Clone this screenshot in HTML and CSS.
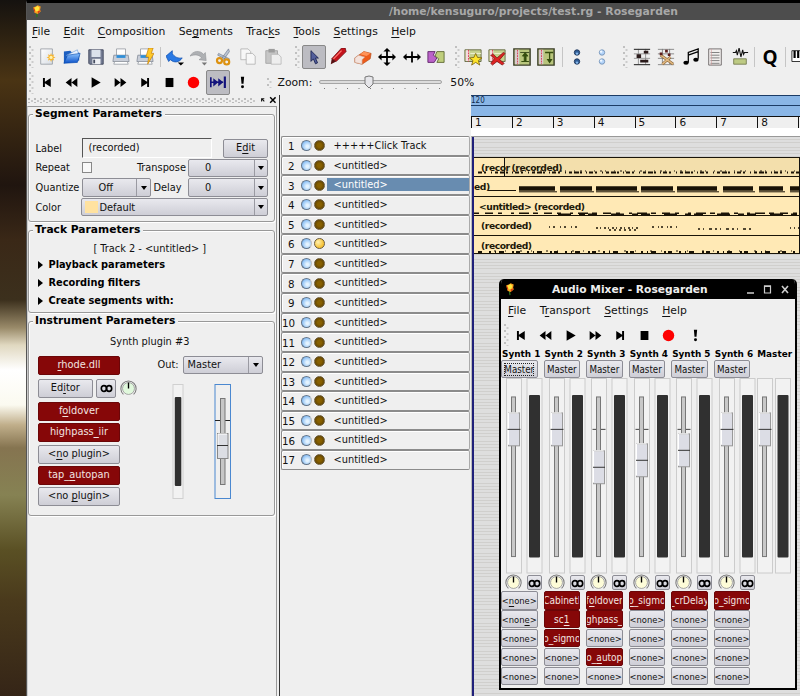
FILE: index.html
```html
<!DOCTYPE html>
<html lang="en">
<head>
<meta charset="utf-8">
<title>Rosegarden</title>
<link rel="stylesheet" href="styles.css">
</head>
<body>
<svg class="defs" aria-hidden="true">
  <defs>
    <linearGradient id="blue" x2="0" y2="1"><stop offset="0" stop-color="#8cc4ff"/><stop offset="1" stop-color="#0b50c8"/></linearGradient>
    <linearGradient id="paper" x2="1" y2="1"><stop offset="0" stop-color="#fff"/><stop offset="1" stop-color="#d8dde4"/></linearGradient>
    <symbol id="new" viewBox="0 0 20 20"><path d="M3 1h13v17H3z" fill="url(#paper)" stroke="#8a8f98" stroke-width=".8"/><path d="M14.500 5.500l1 2.500 2.500-1-1 2.500 2.500 1-2.500 1 1 2.500-2.500-1-1 2.500-1-2.500-2.500 1 1-2.500-2.500-1 2.500-1-1-2.500 2.500 1z" fill="#f7b42c"/><circle cx="14.500" cy="10.500" r="1.800" fill="#fff3b0"/></symbol>
    <symbol id="open" viewBox="0 0 20 20"><path d="M1 17V4l7-1 2 2h8v9z" fill="#1d5fc0"/><path d="M4 8l12-6 2 8-10 4z" fill="#e8f2ff" stroke="#6b9bd8" stroke-width=".7"/><path d="M1 17L5 8l14-2-3 10z" fill="url(#blue)" stroke="#0b4cae" stroke-width=".7"/></symbol>
    <symbol id="save" viewBox="0 0 20 20"><path d="M2 2h16v16H3l-1-1z" fill="#747c93" stroke="#3d4459"/><path d="M5 2h10v8H5z" fill="#dce2ec"/><path d="M6 12h9v6H6z" fill="#eef0f4"/><path d="M7 13h2v4H7z" fill="#454c60"/></symbol>
    <symbol id="print" viewBox="0 0 20 20"><path d="M5 9V1h10v8z" fill="#fff" stroke="#8a8f98" stroke-width=".8"/><path d="M2 8h16l1 7H1z" fill="#c9ced8" stroke="#7b8190" stroke-width=".8"/><path d="M5 8h10v3H5z" fill="#2f8fd8"/><path d="M3 15h14l1 3H2z" fill="#fff" stroke="#8a8f98" stroke-width=".8"/></symbol>
    <symbol id="preview" viewBox="0 0 20 20"><use href="#print"/><path d="M14 0h5l-2 6h3l-7 12 1-8h-3z" fill="#ffc928" stroke="#c88208" stroke-width=".8"/></symbol>
    <symbol id="undo" viewBox="0 0 20 20"><path d="M0 9l7-6v3c2 4 7 6 11 5 -3 5-9 6-13 2l-2 2z" fill="#2a79e4" stroke="#0b4cae" stroke-width=".8"/><path d="M13 16h7l-3.500 3.500z"/></symbol>
    <symbol id="redo" viewBox="0 0 20 20"><path d="M18 14l-8-1 3-2C10 7 5 7 0 9 3 3 11 2 15 7l2-2z" fill="#aeb0b3" stroke="#8e9093" stroke-width=".6"/><path d="M13 16h6l-3 3.500z" fill="#777"/></symbol>
    <symbol id="cut" viewBox="0 0 20 20"><path d="M15 1l1 3-7 10-2-2zM4 6l12 6-1 2L3 8z" fill="#bcc5d2" stroke="#67758b" stroke-width=".7"/><g fill="none" stroke="#dd9211" stroke-width="2.400"><circle cx="5" cy="14" r="2.800"/><circle cx="13" cy="15.500" r="2.800"/></g></symbol>
    <symbol id="copy" viewBox="0 0 20 20"><g fill="#f7f7f7" stroke="#a9a9a9" stroke-width=".8"><path d="M2 1h8l3 3v9H2z"/><path d="M8 6h7l3 3v9H8z"/></g></symbol>
    <symbol id="paste" viewBox="0 0 20 20"><path d="M2 3h13v14H2z" fill="#c6c6c6" stroke="#a5a5a5"/><path d="M5 1h7v4H5z" fill="#9d9d9d"/><path d="M8 7h8l3 3v8H8z" fill="#eee" stroke="#b0b0b0" stroke-width=".8"/></symbol>
    <symbol id="arrow" viewBox="0 0 20 20"><path d="M6 2v13l3-3 2.500 6 2.500-1.200-2.500-5.800H15z" fill="#525e9b" stroke="#171e4c"/></symbol>
    <symbol id="pencil" viewBox="0 0 20 20"><path d="M14 0l4 0 1 4-11 11-5-3z" fill="#c4121b" stroke="#640a0e" stroke-width=".8"/><path d="M14 3L5 12" stroke="#ff7b72" stroke-width="1.300"/><path d="M3 12l5 3-6 3z" fill="#571012"/></symbol>
    <symbol id="eraser" viewBox="0 0 20 20"><path d="M1 11l10-7 8 2-1 6-9 6-8-2z" fill="#ed5b1b" stroke="#b8501c" stroke-width=".8"/><path d="M1 11l4-3 7 2-3 3v5l-8-2z" fill="#f3e2dc" stroke="#c9a08c" stroke-width=".6"/><path d="M11 4l7 2-4 3-7-2z" fill="#ff9358"/></symbol>
    <symbol id="move" viewBox="0 0 20 20"><path d="M10 0l4 4h-3v5h5V6l4 4-4 4v-3h-5v5h3l-4 4-4-4h3v-5H4v3l-4-4 4-4v3h5V4H6z"/></symbol>
    <symbol id="resize" viewBox="0 0 20 20"><path d="M9 4h2v5h5V6l4 4-4 4v-3h-5v5H9v-5H4v3l-4-4 4-4v3h5z"/></symbol>
    <symbol id="split" viewBox="0 0 20 20"><path d="M1 4h8l-2 4 4 3-3 5H1z" fill="#bb63c9" stroke="#60266a"/><path d="M11 4h8v12h-8l2-4-4-3z" fill="#bfce7c" stroke="#5f6937"/></symbol>
    <symbol id="seg" viewBox="0 0 20 20"><path d="M1 2h18v13H1z" fill="#c4d08e" stroke="#63683f"/><path d="M7 6h12" stroke="#f5f5df"/><path d="M2 2.500h4v12H2z" fill="#f3dbe0"/><path d="M5 2v13" stroke="#dc3850" stroke-dasharray="2 1"/></symbol>
    <symbol id="star" viewBox="0 0 20 20"><use href="#seg"/><path d="M13 6l2 4.500 5 .5-4 3 1.500 5-4.500-3-4.500 3L10 14l-4-3 5-.5z" fill="#ffe52b" stroke="#79610b" stroke-width=".9"/></symbol>
    <symbol id="del" viewBox="0 0 20 20"><use href="#seg"/><path d="M3 8l3-1 4 4 7-6 2 1-6 7 5 4-2 2-6-4-5 4-2-2 4-5z" fill="#dc2323" stroke="#781010" stroke-width=".8"/></symbol>
    <symbol id="up" viewBox="0 0 20 20"><path d="M1 1h18v18H1z" fill="#b8c57c" stroke="#3b3e28" stroke-width="1.600"/><path d="M2 2h5v16H2z" fill="#d9cccd"/><path d="M5 2v16" stroke="#d83e54" stroke-dasharray="2 1"/><path d="M8 5h10" stroke="#38471c"/><path d="M13.500 5l3 4h-2v6h3H9.500h3V9h-2z" stroke="#354d0e" fill="#354d0e"/></symbol>
    <symbol id="down" viewBox="0 0 20 20"><path d="M1 1h18v18H1z" fill="#b8c57c" stroke="#3b3e28" stroke-width="1.600"/><path d="M2 2h5v16H2z" fill="#d9cccd"/><path d="M5 2v16" stroke="#d83e54" stroke-dasharray="2 1"/><path d="M9 5h9M14 5v8h2l-2 3-2-3h2" stroke="#354d0e" stroke-width="1.400" fill="#354d0e"/></symbol>
    <symbol id="dots" viewBox="0 0 20 20"><g fill="#315e97" stroke="#1d3458"><circle cx="10" cy="5" r="3"/><circle cx="10" cy="15" r="3"/></g><g fill="#88b9ea"><circle cx="10" cy="6.200" r="1.300"/><circle cx="10" cy="16.200" r="1.300"/></g></symbol>
    <symbol id="dotslight" viewBox="0 0 20 20"><g fill="#b5d5fa" stroke="#7392b7"><circle cx="10" cy="5" r="3"/><circle cx="10" cy="15" r="3"/></g><g fill="#f0f8ff"><circle cx="9" cy="4" r="1.300"/><circle cx="9" cy="14" r="1.300"/></g></symbol>
    <symbol id="matrix" viewBox="0 0 20 20"><path d="M1 1.500h18M1 6.500h18M1 11.500h18M1 18.500h18M6 1v17M14 1v17" stroke="#888" stroke-width=".9"/><path d="M1 1.500h18M1 18.500h18" stroke="#222"/><path d="M4 7h5v4H4zM12 3h5v3h-5zM8 13h9v3H8z" fill="#2b1b1b"/></symbol>
    <symbol id="perc" viewBox="0 0 20 20"><path d="M1 1.500h18M1 6.500h18M1 11.500h18M1 18.500h18M6 1v17M14 1v17" stroke="#777" stroke-width=".9"/><path d="M4 8l14 10M15 10L6 18" stroke="#8a6234" stroke-width="3"/><path d="M4 8l14 10M15 10L6 18" stroke="#e0b880" stroke-width="1.800"/><path d="M3 5h3v3H3zM9 2h3v3H9zM12 6h3v3h-3z" fill="#5c1c1c"/></symbol>
    <symbol id="note" viewBox="0 0 20 20"><path d="M7 16V5l11-4v11M7 8l11-4" fill="none" stroke="#000" stroke-width="1.400"/><ellipse cx="4.500" cy="16.500" rx="3" ry="2.200"/><ellipse cx="15.500" cy="13" rx="3" ry="2.200"/></symbol>
    <symbol id="list" viewBox="0 0 20 20"><path d="M3 1h14v18H3z" fill="#f2efee" stroke="#6c6666"/><path d="M5 5h10M5 8h10M5 11h10M5 14h10M5 17h10" stroke="#777"/><path d="M6 1v18" stroke="#d09b9b" stroke-width=".7"/></symbol>
    <symbol id="audio" viewBox="0 0 20 20"><path d="M2 5h3l1-2 1 5 2-8 2 10 2-8 1 5 1-2h4" fill="none" stroke="#111" stroke-width="1.200"/><path d="M3 12h14v6H3z" fill="#bdca83" stroke="#767d51"/></symbol>
    <symbol id="keys" viewBox="0 0 20 20"><path d="M1 3h19v12H1z" fill="#fff" stroke="#222"/><path d="M4 3v8M8 3v8M12 3v8" stroke="#000" stroke-width="2.400"/><path d="M12 12h8v7l-6-2z" fill="#b5d829"/></symbol>
    <symbol id="first" viewBox="0 0 20 20"><path d="M3 3h3v6l9-6v14l-9-6v6H3z"/></symbol>
    <symbol id="rew" viewBox="0 0 20 20"><path d="M10 3v14L1 10zM19 3v14l-9-7z"/></symbol>
    <symbol id="play" viewBox="0 0 20 20"><path d="M4 2l14 8-14 8z"/></symbol>
    <symbol id="fwd" viewBox="0 0 20 20"><path d="M1 3v14l9-7zM10 3v14l9-7z"/></symbol>
    <symbol id="last" viewBox="0 0 20 20"><path d="M17 3h-3v6L5 3v14l9-6v6h3z"/></symbol>
    <symbol id="stop" viewBox="0 0 20 20"><path d="M4 3h12v14H4z"/></symbol>
    <symbol id="rec" viewBox="0 0 20 20"><circle cx="10" cy="10" r="8.800" fill="#fe0000"/></symbol>
    <symbol id="follow" viewBox="0 0 20 20"><path d="M1 4v12M1 10h15" stroke="#12127b" stroke-width="2"/><path d="M4 5l6 5-6 5zM10 5l6 5-6 5z" fill="#12127b"/><path d="M18 3v14" stroke="#12127b" stroke-width="2.600"/></symbol>
    <symbol id="panic" viewBox="0 0 20 20"><path d="M7.500 1h5l-1 11h-3z"/><circle cx="10" cy="16.500" r="2.300"/></symbol>
    <symbol id="rose" viewBox="0 0 16 20"><path d="M7 12l1 7" stroke="#28771d" stroke-width="2"/><path d="M2 3l4-1 3-2 5 2-1 5 1 3-5 4-5-2-1-4z" fill="#f79a20"/><path d="M4 4l5-3 3 3-2 5-4 1z" fill="#ffe73d"/><path d="M2 3l3 5-1 3zM9 10l5-2-4 5z" fill="#da3113"/></symbol>
    <symbol id="link" viewBox="0 0 20 14"><g fill="none" stroke="#000" stroke-width="2.600"><rect x="2" y="2.500" width="8" height="9" rx="4"/><rect x="10" y="2.500" width="8" height="9" rx="4"/></g></symbol>
    <symbol id="knob" viewBox="0 0 20 20"><path d="M4 17A9 9 0 1 1 16 17" fill="none" stroke="#777" stroke-width="1.200"/><circle cx="10" cy="10" r="7" stroke="#999"/><path d="M10 3v7" stroke="#000" stroke-width="1.600"/></symbol>
  </defs>
</svg>

<main class="window">
  <header class="title"><svg class="rose"><use href="#rose"/></svg><span>/home/kensuguro/projects/test.rg - Rosegarden</span></header>
  <nav class="menu">
    <span><u>F</u>ile</span><span><u>E</u>dit</span><span><u>C</u>omposition</span><span>Se<u>g</u>ments</span><span>Trac<u>k</u>s</span><span><u>T</u>ools</span><span><u>S</u>ettings</span><span><u>H</u>elp</span>
  </nav>
  <div class="toolbar main-tools">
    <i class="grip"></i>
    <svg><use href="#new"/></svg><svg><use href="#open"/></svg><svg><use href="#save"/></svg><svg><use href="#print"/></svg><svg><use href="#preview"/></svg>
    <i class="sep"></i>
    <svg><use href="#undo"/></svg><svg><use href="#redo"/></svg><svg><use href="#cut"/></svg><svg><use href="#copy"/></svg><svg><use href="#paste"/></svg>
    <i class="grip g2"></i>
    <svg class="on"><use href="#arrow"/></svg><svg><use href="#pencil"/></svg><svg><use href="#eraser"/></svg><svg><use href="#move"/></svg><svg><use href="#resize"/></svg><svg><use href="#split"/></svg>
    <i class="grip g3"></i>
    <svg><use href="#star"/></svg><svg><use href="#del"/></svg><svg><use href="#up"/></svg><svg><use href="#down"/></svg>
    <i class="sep s2"></i>
    <svg><use href="#dots"/></svg><svg><use href="#dotslight"/></svg>
    <i class="grip g4"></i>
    <svg><use href="#matrix"/></svg><svg><use href="#perc"/></svg><svg><use href="#note"/></svg><svg><use href="#list"/></svg><svg><use href="#audio"/></svg>
    <i class="sep s3"></i>
    <b class="quant">Q</b>
    <i class="sep s4"></i>
    <svg><use href="#keys"/></svg>
  </div>
  <div class="toolbar transport">
    <i class="grip"></i>
    <svg><use href="#first"/></svg><svg><use href="#rew"/></svg><svg><use href="#play"/></svg><svg><use href="#fwd"/></svg><svg><use href="#last"/></svg><svg><use href="#stop"/></svg><svg><use href="#rec"/></svg><svg class="on"><use href="#follow"/></svg><svg><use href="#panic"/></svg>
    <i class="grip short"></i>
    <span class="zlabel">Zoom:</span>
    <svg class="zoom" viewBox="0 0 124 20"><rect x=".5" y="7.500" width="122" height="3" rx="1.500" fill="#dcdcdc" stroke="#a5a5a5"/><path d="M5 15.500h117" stroke="#777" stroke-dasharray="1 10.500"/><path d="M46 4q4-2 8 0v7l-4 4-4-4z" fill="#e6e6ea" stroke="#777"/></svg>
    <span class="zval">50%</span>
  </div>

  <div class="body">
    <aside class="dock">
      <div class="dockbar"><i></i><svg viewBox="0 0 20 10"><path d="M4 6V3h3M4 3l3 3" fill="none" stroke="#111" stroke-width="1.200"/><path d="M13.500 1.500l6 6M19.500 1.500l-6 6" stroke="#000" stroke-width="1.600"/></svg></div>
      <div class="panels">
        <section class="box segp">
          <h2>Segment Parameters</h2>
          <div class="row"><label>Label</label><span class="field">(recorded)</span><span class="btn edit">E<u>d</u>it</span></div>
          <div class="row"><label>Repeat</label><i class="check"></i><label class="tr">Transpose</label><span class="combo c80">0</span></div>
          <div class="row"><label>Quantize</label><span class="combo c69">Off</span><label class="dl">Delay</label><span class="combo c80">0</span></div>
          <div class="row"><label>Color</label><span class="combo wide"><i class="swatch"></i>Default</span></div>
        </section>
        <section class="box trackp">
          <h2>Track Parameters</h2>
          <p>[ Track 2 - &lt;untitled&gt; ]</p>
          <ul><li>Playback parameters</li><li>Recording filters</li><li>Create segments with:</li></ul>
        </section>
        <section class="box instp">
          <h2>Instrument Parameters</h2>
          <p>Synth plugin #3</p>
          <div class="cols">
            <div class="plugs">
              <span class="btn red"><u>r</u>hode.dll</span>
              <div class="edrow"><span class="btn">Ed<u>i</u>tor</span><span class="btn lk"><svg><use href="#link"/></svg></span><svg class="knob green"><use href="#knob"/></svg></div>
              <span class="btn red">f<u>o</u>ldover</span><span class="btn red">highpass<u>_</u>iir</span><span class="btn">&lt;<u>n</u>o plugin&gt;</span><span class="btn red">tap_<u>a</u>utopan</span><span class="btn">&lt;no <u>p</u>lugin&gt;</span>
            </div>
            <div class="outs">
              <div class="outrow"><span>Out:</span><span class="combo c80">Master</span></div>
              <svg class="levels" viewBox="0 0 110 116"><rect x="15" y=".5" width="10" height="114" fill="#f2f2f2" stroke="#d0d0d0"/><rect x="16.800" y="13" width="6.500" height="89" rx="1" fill="#303030"/><rect x="57" y=".5" width="15.500" height="114" fill="none" stroke="#4a88d0"/><path d="M57 36.500h15" stroke="#222"/><rect x="62.500" y="14.500" width="4.500" height="86" fill="#c6c6c6" stroke="#777"/><rect x="59.500" y="49.500" width="10.500" height="25" fill="#dcdee4" stroke="#888"/><path d="M60 50h9M60 50v11" stroke="#fff"/><path d="M59 61.500h11" stroke="#333"/></svg>
            </div>
          </div>
        </section>
      </div>
    </aside>
    <section class="tracks" id="tracks"></section>
    <section class="canvas">
      <div class="tempo">120</div>
      <div class="chord"></div>
      <div class="bars"><span>1</span><span>2</span><span>3</span><span>4</span><span>5</span><span>6</span><span>7</span><span>8</span><span></span></div>
      <div class="loop"></div>
      <div class="grid" id="grid"></div>
    </section>
  </div>
</main>

<section class="mixer">
  <header><svg class="rose"><use href="#rose"/></svg><b>Audio Mixer - Rosegarden</b><svg class="ctl" viewBox="0 0 44 12"><path d="M1 10h7" stroke="#ccc" stroke-width="1.600"/><path d="M18.500 3h6v7h-6z" fill="none" stroke="#ccc" stroke-width="1.200"/><path d="M18 3.300h7" stroke="#ccc" stroke-width="1.600"/><path d="M36 3l6 7M42 3l-6 7" stroke="#ccc" stroke-width="1.600"/></svg></header>
  <div class="mixbody">
    <nav><span><u>F</u>ile</span><span>T<u>r</u>ansport</span><span><u>S</u>ettings</span><span><u>H</u>elp</span></nav>
    <div class="mixtools"><i class="grip"></i><svg><use href="#first"/></svg><svg><use href="#rew"/></svg><svg><use href="#play"/></svg><svg><use href="#fwd"/></svg><svg><use href="#last"/></svg><svg><use href="#stop"/></svg><svg><use href="#rec"/></svg><svg><use href="#panic"/></svg></div>
    <div class="strips" id="strips"></div>
  </div>
</section>
<script src="app.js"></script>
</body>
</html>
```
FILE: styles.css
```css
* { box-sizing: border-box; }
body {
  margin: 0; width: 800px; height: 696px; overflow: hidden; position: relative;
  font: 10.9px "DejaVu Sans Condensed", "DejaVu Sans", sans-serif; font-stretch: condensed; color: #111;
  background: linear-gradient(#15120f 0, #4a3414 80px, #20150f 185px, #3a2817 240px, #3c301d 300px, #9a8b6a 328px, #e0d8c0 345px, #fff 370px, #fbfaf0 405px, #c0ae8a 425px, #857450 448px, #868253 495px, #5a5024 550px, #4a3a1c 600px, #352517 696px);
}
i { font-style: normal; }
u { text-underline-offset: 1.500px; text-decoration-thickness: 1px; }
svg { display: block; flex: none; }
.defs { position: absolute; width: 0; height: 0; }
.window { margin-left: 26px; width: 774px; height: 696px; border-top: 3px solid #000; border-left: 1px solid #555; background: #efefef; display: flex; flex-direction: column; }
.title { height: 17px; flex: none; background: #4d4d4d; color: #a8a8a8; display: flex; align-items: center; font: bold 10.800px "DejaVu Sans"; white-space: nowrap; }
.title span { margin-left: 347px; }
.rose { width: 10px; height: 13px; margin-left: 5px; }
.menu { height: 23px; flex: none; display: flex; align-items: center; font: 10.800px "DejaVu Sans"; padding-left: 5px; margin-bottom: 1px; }
.menu span { margin-right: 13.400px; }
.toolbar { display: flex; align-items: center; flex: none; white-space: nowrap; }
.main-tools { height: 26px; }
.main-tools > svg { width: 18px; height: 18px; margin: 0 3.250px; }
.grip { width: 5px; height: 22px; flex: none; background: radial-gradient(circle at 1px 1px, #c0c0c0 .8px, transparent 1px) 0 0/5px 6px, radial-gradient(circle at 1px 1px, #ccc .8px, transparent 1px) 2.500px 3px/5px 6px; }
.toolbar .grip { margin: 0 1px 0 2px; }
.toolbar svg.on { width: 24.500px; height: 24.500px; padding: 3px; margin: 0; background: #bcbcc2; border: 1px solid #888; border-radius: 2px; }
.sep { width: 1px; height: 20px; background: #c5c5c5; margin: 0 2px; flex: none; }
.main-tools .g2 { margin: 0 1.500px 0 10px; }
.main-tools .g3 { margin: 0 1px 0 6px; }
.main-tools .s2 { margin: 0 2.500px 0 3px; }
.main-tools .g4 { margin: 0 2px 0 8.500px; }
.main-tools .s3 { margin: 0 2px; }
.quant { font: bold 19px/20px "Open Sans", "DejaVu Sans", sans-serif; width: 26px; flex: none; text-align: center; color: #000; }
.main-tools .s4 { margin: 0 2px; }
.transport { height: 25px; }
.transport > svg { width: 13px; height: 13px; margin: 0 5.700px; }
.transport > .on { margin: 0; }
.toolbar .short { height: 10px; margin: 0 6px 0 12px; }
.zlabel, .zval { font: 10.800px "DejaVu Sans"; }
.transport > svg.zoom { width: 124px; height: 20px; margin: 0 7px 0 7px; }
.body { display: flex; flex: 1; min-height: 0; }
.dock { width: 253px; flex: none; border-right: 1px solid #333; }
.dockbar { height: 11px; display: flex; align-items: center; gap: 3px; padding: 0 3px 0 1px; }
.dockbar i { flex: 1; height: 5px; background: radial-gradient(circle at 1px 1px, #bbb .8px, transparent 1px) 0 0/6px 4px, radial-gradient(circle at 1px 1px, #c8c8c8 .8px, transparent 1px) 3px 2px/6px 4px; }
.dockbar svg { width: 18px; height: 9px; }
.panels { width: 250px; height: 590px; border: 1px solid #999; border-bottom: 0; border-left-color: #ccc; padding: 7px 1px 0 0; }
.box { border: 1px solid #999; border-radius: 3px; margin-bottom: 7.800px; padding-left: 6.500px; box-shadow: 1px 1px #fff, inset 1px 1px #fff; }
.segp { height: 108.200px; }
.trackp { height: 82.800px; }
.instp { height: 195.500px; }
h2 { font: bold 10.700px/12px "DejaVu Sans"; margin: -7px 0 0 -2.500px; width: max-content; padding: 0 3px 0 2px; background: #efefef; color: #000; }
.segp h2 { margin-bottom: 18.300px; }
.row { display: flex; align-items: center; height: 19.700px; white-space: nowrap; padding-right: 6px; }
.row label:first-child { width: 46px; }
.field { width: 130px; height: 19.500px; line-height: 18px; padding-left: 6px; border: 1px solid #fff; border-top-color: #555; border-left-color: #555; }
.btn { display: block; border: 1px solid #8d8d95; border-radius: 2px; background: linear-gradient(#e9e9ee, #ceced6); text-align: center; line-height: 16.500px; height: 19px; white-space: nowrap; overflow: hidden; }
.edit { width: 45px; margin-left: auto; }
.check { width: 10.500px; height: 11px; border: 1px solid #888; background: #f8f8f8; }
.tr, .dl { margin-left: auto; }
.tr { margin-right: 2px; }
.row .dl { margin-left: 3px; margin-right: auto; }
.combo { display: flex; align-items: center; height: 18.500px; border: 1px solid #8d8d95; border-radius: 2px; background: linear-gradient(#e9e9ee, #ceced6); padding-left: 16px; position: relative; }
.combo::before { content: ""; position: absolute; right: 12.500px; top: 0; bottom: 0; border-left: 1px solid #9a9aa2; }
.combo::after { content: ""; position: absolute; right: 3px; top: 6.500px; border: 3px solid transparent; border-top: 4px solid #000; border-bottom: 0; }
.c80 { width: 80px; }
.c69 { width: 69px; }
.wide { width: 187px; padding-left: 3px; }
.swatch { width: 13px; height: 12.500px; background: #ffe2a0; margin-right: 1px; }
.box p { margin: 0; text-align: center; line-height: 14px; }
.trackp p { margin-top: 6.500px; padding-right: 10px; }
.instp p { margin-top: 8.500px; padding-right: 10px; }
ul { list-style: none; margin: 0; padding: 0; font-weight: bold; color: #000; }
li { height: 18px; line-height: 18px; display: flex; align-items: center; }
li::before { content: ""; border: 4.500px solid transparent; border-left: 5px solid #000; border-right: 0; margin: 0 6px 0 2px; }
.cols { display: flex; margin-top: 6.500px; padding-left: 2.500px; }
.plugs { display: flex; flex-direction: column; gap: 2.300px; width: 110px; }
.plugs > .btn { width: 82px; }
.btn.red { background: #860708; border-color: #6b0608; color: #f3e4e0; }
.edrow { display: flex; align-items: center; gap: 3.500px; height: 23px; }
.edrow .btn { width: 54.500px; }
.edrow .lk { width: 20px; padding: 4px 2.500px; }
.lk svg { width: 13px; height: 9px; }
.knob { width: 17px; height: 17px; fill: #fdfcd8; }
.knob.green { fill: #e0f8dc; }
.outs { flex: 1; }
.outrow { display: flex; align-items: center; gap: 4px; padding-left: 9.500px; }
.outrow .combo { padding-left: 4px; }
.levels { width: 110px; height: 116px; margin: 10px 0 0 10px; }
.tracks { width: 191px; flex: none; padding: 41px 1px 0; }
.track { height: 19.630px; display: flex; align-items: center; border: 1px solid #8b8b8b; border-right-color: #aaa; border-radius: 2px; box-shadow: inset 1px 1px #fff; }
.track b { font: 10.300px "DejaVu Sans"; width: 12.500px; text-align: right; margin: 1px 6px 0 0; }
.led { width: 11px; height: 11px; border-radius: 50%; margin-right: 2px; border: 1px solid #63758a; border-right-color: #bbb; background: radial-gradient(circle at 60% 60%, #e4f3ff 15%, #8cc0f5 70%); }
.led.rec { background: radial-gradient(circle, #886000 30%, #4c3500); border-color: #6b5a38; margin-right: 1px; }
.led.armed { background: radial-gradient(circle at 35% 35%, #fff0b0, #f6c338 65%); }
.track span { flex: 1; align-self: stretch; margin: 2px 0 3px 1px; line-height: 13px; padding-left: 7px; }
.track.sel span { background: #688cb0; color: #fff; }
.canvas { width: 329px; flex: none; display: flex; flex-direction: column; overflow: hidden; }
.tempo, .chord { height: 10px; background: #8ab6e6; border-top: 1px solid #1c3c66; font: 8px/9px "DejaVu Sans Condensed"; flex: none; color: #102848; }
.chord { height: 10.500px; }
.bars { display: flex; height: 12px; flex: none; border-top: 1px solid #111; font: 10.500px/11px "DejaVu Sans"; }
.bars span { width: 40.900px; flex: none; border-left: 1px solid #111; padding-left: 3px; }
.loop { height: 8px; flex: none; background: #fff; }
.grid { flex: 1; border-top: 1px solid #999; padding-top: 20px; border-left: 1px solid #bbb; background: repeating-linear-gradient(#dedede 0 2px, #d0cfcd 2px 2.800px); box-shadow: inset 2px 0 #20207a; }
.lane { height: 19.550px; margin-left: 2px; border-top: 1px solid #1a1408; border-right: 1px solid #111; background: #ffe9b5; position: relative; font: bold 9.200px/19px "DejaVu Sans"; font-stretch: normal; letter-spacing: -.42px; white-space: nowrap; overflow: hidden; color: #201808; display: flex; }
.lane:last-child { border-bottom: 1px solid #1a1408; }
.lane svg { position: absolute; inset: 0; width: 326px; height: 19px; }
.lane span { position: relative; z-index: 1; margin-left: 7px; }
.lane.over { background: linear-gradient(90deg, #ffe9b5 30px, #111 30px 31px, #f3dfac 31px); }
.lane.over .under { width: 30.500px; overflow: hidden; }
.lane.over span + span { margin-left: 0; }
.lane .cut { margin-left: 0; }
.lane .far { margin-left: 5px; }
.mixer { position: absolute; left: 499px; top: 279px; width: 298px; height: 411px; border: 2px solid #000; border-width: 0 2px 2px; border-radius: 5px 5px 0 0; background: #efefef; overflow: hidden; }
.mixer header { height: 20px; background: #000; color: #eee; display: flex; align-items: center; }
.mixer .rose { margin-left: 4px; }
.mixer header b { font: bold 10.700px "DejaVu Sans"; margin-left: 37px; flex: 1; white-space: nowrap; }
.ctl { width: 44px; height: 12px; margin-right: 5px; }
.mixbody nav { display: flex; height: 23px; align-items: center; gap: 13.700px; padding-left: 7px; font: 10.800px "DejaVu Sans"; }
.mixtools { display: flex; align-items: center; height: 26px; }
.mixtools .grip { margin: 0 2px 0 3px; }
.mixtools svg { width: 13px; height: 13px; margin: 0 7.700px 0 3.900px; }
.mixtools svg:nth-of-type(8) { margin-left: 5.500px; }
.strips { display: flex; gap: 6.550px; }
.strip { width: 36px; flex: none; }
.strip h3 { margin: 0 -2px 0 1px; font: bold 8.900px/12px "DejaVu Sans"; white-space: nowrap; color: #000; }
.strip .btn { width: 36.500px; font-size: 9.700px; line-height: 17px; display: flex; justify-content: center; height: 18.500px; }
.strip .route { height: 18px; }
.strip.focus .route span { outline: 1px dotted #222; outline-offset: -1px; height: 13px; line-height: 13px; margin-top: 2px; }
.strip .gap { height: 18px; }
.faders { width: 42px; height: 196.500px; }
.pan { display: flex; align-items: center; justify-content: space-between; height: 16.500px; padding: 0 0 0 4px; width: 41px; }
.pan .knob { width: 17px; height: 17px; }
.strip .pan .lk { width: 15px; height: 15px; padding: 3px 0; flex: none; }
.slots { display: flex; flex-direction: column; gap: .4px; }
.strip .slots .btn { font-size: 9.300px; }
.strip .slots .red { font-size: 10px; }
```
FILE: app.js
```js
// Track list: numbered rows with mute and record LEDs.
const tracks = document.getElementById('tracks');
for (let n = 1; n <= 17; n++) {
  const name = n === 1 ? '+++++Click Track' : '&lt;untitled&gt;';
  tracks.insertAdjacentHTML('beforeend',
    `<div class="track${n === 3 ? ' sel' : ''}"><b>${n}</b><i class="led"></i><i class="led rec${n === 6 ? ' armed' : ''}"></i><span>${name}</span></div>`);
}

// Segment lanes: label markup plus stroked note previews.
const line = (x1, x2, y, w, dash) =>
  `<path d="M${x1} ${y}H${x2}" stroke="#1a1206" stroke-width="${w}"${dash ? ` stroke-dasharray="${dash}"` : ''}/>`;
const block = (x1, x2) => line(x1, x2, 11.5, 4.5) + line(x1, x2 + 2, 14.8, 1);
const lanes = [
  ['over', '<span class="under">(recor</span><span>(recorded)</span>',
    line(4, 326, 14.5, 2, '4 2 2 5 1 3 3 2 5 1 2 4 1 2') + line(40, 326, 13, 1, '1 5 2 3 1 8')],
  ['', '<span class="cut">ed)</span>',
    line(14, 42, 13.5, 1) + [[45, 81], [86, 118], [122, 163], [167, 199], [203, 243], [249, 279], [285, 309], [316, 328]].map(b => block(...b)).join('')],
  ['', '<span class="far">&lt;untitled&gt; (recorded)</span>',
    line(0, 326, 16.2, 1.6, '5 6 8 5 4 9 3 5 10 4') + line(84, 326, 17.3, 1.5, '13 8 6 3 9 14')],
  ['', '<span>(recorded)</span>',
    line(75, 105, 11, 1.3, '1 3 2 5') + line(122, 164, 12, 1.4, '2 2 1 3') + line(135, 165, 14, 1.3, '2 3') +
    line(178, 204, 11, 1.3, '2 4 1 2') + line(224, 280, 13, 1.5, '2 3 1 5 3 3') + line(316, 326, 12, 1.4, '1 3')],
  ['', '<span>(recorded)</span>',
    line(4, 326, 16, 1.8, '4 7 2 4 1 3 5 8 2 2') + line(20, 326, 15, 1.2, '2 9 1 14')],
];
document.getElementById('grid').innerHTML = lanes.map(([cls, label, notes]) =>
  `<div class="lane ${cls}"><svg viewBox="0 0 326 19">${notes}</svg>${label}</div>`).join('');

// Mixer strips: the number is the fader handle's centre in strip pixels.
const N = '&lt;none&gt;';
const strips = [
  ['Synth 1', 51, ['&lt;<u>n</u>one&gt;', '&lt;non<u>e</u>&gt;', N, N, N]],
  ['Synth 2', 51, ['!Cabinetl', '!sc<u>1</u>', '!o_sigmo', N, N]],
  ['Synth 3', 89, ['!f<u>o</u>ldover', '!ghpass_', N, '!o_<u>a</u>utop', N]],
  ['Synth 4', 82, ['!<u>o</u>_sigmo', N, N, N, N]],
  ['Synth 5', 72, ['!_crDelay', N, N, N, N]],
  ['Synth 6', 51, ['!o_sigmo', N, N, N, N]],
  ['Master', 51, null],
];
const fader = (c, master) => {
  const x = master ? 1.5 : 5.5;
  const m = master ? 19.5 : 26;
  return `<svg class="faders" viewBox="0 0 42 197" preserveAspectRatio="none">
    <rect x="${x}" y=".5" width="15" height="195" fill="#f2f2f2" stroke="#ccc"/>
    <rect x="${m}" y=".5" width="15" height="195" fill="#f2f2f2" stroke="#ccc"/>
    <rect x="${m + 2}" y="17" width="11" height="163" rx="1" fill="#303030"/>
    <path d="M${x + 1} 51.500h13" stroke="#444"/>
    <rect x="${x + 5}" y="19" width="4" height="160" fill="#c8c8c8" stroke="#777"/>
    <rect x="${x + 2}" y="${c - 16}" width="11" height="33" fill="#dcdde5" stroke="#999"/>
    <path d="M${x + 2} ${c + 16}V${c - 16}H${x + 12}" fill="none" stroke="#fff"/>
    <path d="M${x + 1.5} ${c + .5}h12" stroke="#333"/></svg>`;
};
document.getElementById('strips').innerHTML = strips.map(([name, c, slots], i) => `
  <div class="strip${i === 0 ? ' focus' : ''}"><h3>${name}</h3>
    ${slots ? '<div class="btn route"><span>Master</span></div>' : '<div class="gap"></div>'}
    ${fader(c, !slots)}
    ${slots ? `<div class="pan"><svg class="knob"><use href="#knob"/></svg><span class="btn lk"><svg><use href="#link"/></svg></span></div>
    <div class="slots">${slots.map(s => s[0] === '!' ? `<div class="btn red"><span>${s.slice(1)}</span></div>` : `<div class="btn"><span>${s}</span></div>`).join('')}</div>` : ''}
  </div>`).join('');
```
